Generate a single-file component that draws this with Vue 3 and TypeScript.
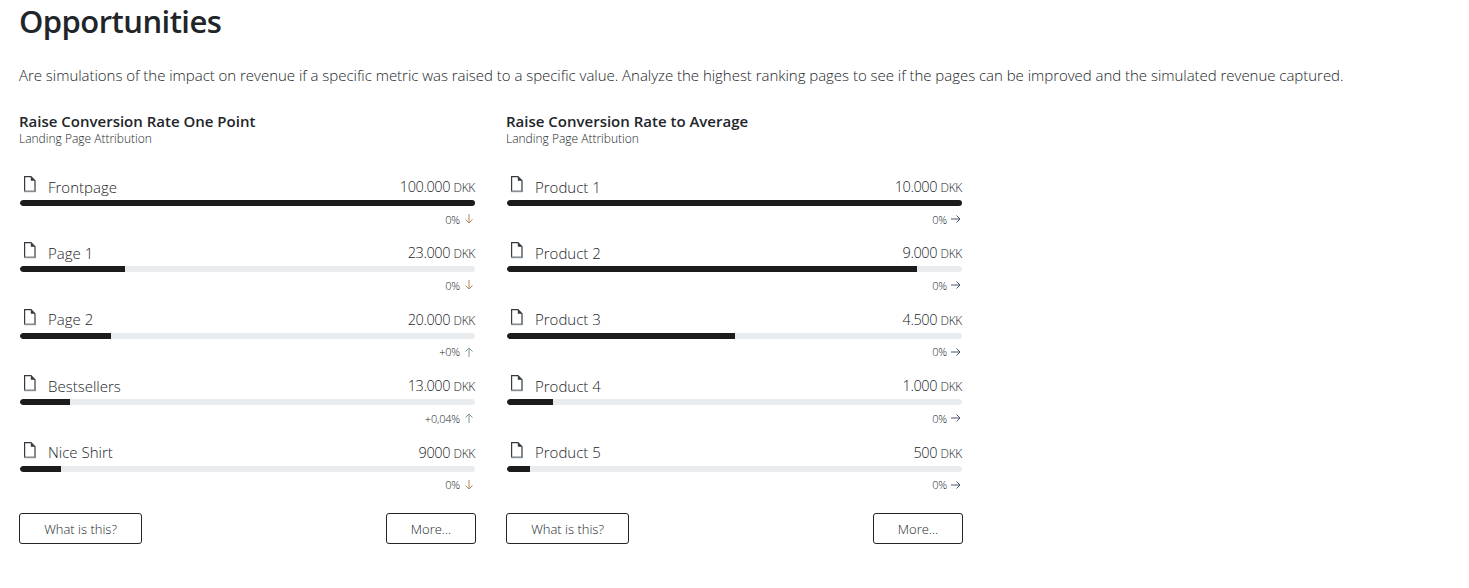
<script setup lang="ts">
interface Row {
  name: string
  value: string
  pct: number
  change: string
  dir: 'up' | 'down' | 'right'
}

interface Card {
  title: string
  rows: Row[]
}

const cards: Card[] = [
  {
    title: 'Raise Conversion Rate One Point',
    rows: [
      { name: 'Frontpage', value: '100.000', pct: 100, change: '0%', dir: 'down' },
      { name: 'Page 1', value: '23.000', pct: 23, change: '0%', dir: 'down' },
      { name: 'Page 2', value: '20.000', pct: 20, change: '+0%', dir: 'up' },
      { name: 'Bestsellers', value: '13.000', pct: 11, change: '+0,04%', dir: 'up' },
      { name: 'Nice Shirt', value: '9000', pct: 9, change: '0%', dir: 'down' },
    ],
  },
  {
    title: 'Raise Conversion Rate to Average',
    rows: [
      { name: 'Product 1', value: '10.000', pct: 100, change: '0%', dir: 'right' },
      { name: 'Product 2', value: '9.000', pct: 90, change: '0%', dir: 'right' },
      { name: 'Product 3', value: '4.500', pct: 50, change: '0%', dir: 'right' },
      { name: 'Product 4', value: '1.000', pct: 10, change: '0%', dir: 'right' },
      { name: 'Product 5', value: '500', pct: 5, change: '0%', dir: 'right' },
    ],
  },
]

const arrows: Record<Row['dir'], string> = {
  up: 'M5 10V1M1.5 4.5 5 1l3.5 3.5',
  down: 'M5 0v9M1.5 5.5 5 9l3.5-3.5',
  right: 'M0 5h9M5.5 1.5 9 5l-3.5 3.5',
}
</script>

<template>
  <div class="page">
    <h1 class="title">Opportunities</h1>
    <p class="intro">Are simulations of the impact on revenue if a specific metric was raised to a specific value. Analyze the highest ranking pages to see if the pages can be improved and the simulated revenue captured.</p>
    <div class="cards">
      <section v-for="card in cards" :key="card.title" class="card">
        <h2 class="card-title">{{ card.title }}</h2>
        <div class="card-sub">Landing Page Attribution</div>
        <div class="rows">
          <div v-for="row in card.rows" :key="row.name" class="row">
            <div class="row-head">
              <span class="row-name">
                <svg class="doc" width="14" height="18" viewBox="0 0 14 18" fill="none" stroke="#343a40" stroke-width="1.2">
                  <path d="M2.6 1.6H9L13 5.8V16.4H2.6z"/>
                  <path d="M8.8 1.6 13 5.8H8.8z" fill="#343a40" stroke="none"/>
                  <path d="M2 16.5h11.6" stroke="#868e96" stroke-width="1.4"/>
                </svg>
                {{ row.name }}
              </span>
              <span class="row-value">{{ row.value }} <small>DKK</small></span>
            </div>
            <div class="bar"><div class="bar-fill" :style="{ width: row.pct + '%' }"></div></div>
            <div class="row-change">
              {{ row.change }}
              <svg width="10" height="10" viewBox="0 0 10 10" fill="none" :stroke="row.dir === 'right' ? '#4a5568' : row.dir === 'up' ? '#7a9a8c' : '#b08a5a'" stroke-width="1">
                <path :d="arrows[row.dir]"/>
              </svg>
            </div>
          </div>
        </div>
        <div class="actions">
          <button type="button" class="btn btn-wide">What is this?</button>
          <button type="button" class="btn">More...</button>
        </div>
      </section>
    </div>
  </div>
</template>

<style>
body {
  background: #fff;
}
</style>

<style scoped>
.page {
  padding: 0 19px;
  color: #212529;
  font-family: "Open Sans", "Noto Sans", sans-serif;
  font-weight: 300;
}

.title {
  margin: 0;
  height: 43px;
  font-size: 31px;
  line-height: 43px;
  font-weight: 600;
  letter-spacing: -0.55px;
}

.intro {
  margin: 20px 0 0;
  font-size: 15px;
  line-height: 24px;
  letter-spacing: -0.03px;
  white-space: nowrap;
}

.cards {
  display: flex;
  gap: 30px;
  margin-top: 24px;
}

.card {
  width: 457px;
}

.card-title {
  margin: 0 0 1px;
  font-size: 15px;
  line-height: 20px;
  font-weight: 600;
}

.card-sub {
  font-size: 12px;
  line-height: 14px;
}

.rows {
  margin-top: 29px;
}

.row {
  height: 66.4px;
  padding: 0 1px;
  box-sizing: border-box;
}

.row-head {
  display: flex;
  justify-content: space-between;
  align-items: center;
  height: 25px;
}

.row-name {
  display: flex;
  align-items: center;
  gap: 12px;
  padding-left: 2px;
  padding-bottom: 2px;
  font-size: 15px;
}

.doc {
  margin-top: -5px;
}

.row-value {
  padding-bottom: 2px;
  font-size: 14.5px;
  letter-spacing: -0.4px;
}

.row-value small {
  font-size: 12px;
  letter-spacing: -0.3px;
}

.bar {
  height: 6px;
  border-radius: 3px;
  background: #e9ecef;
  overflow: hidden;
}

.bar-fill {
  height: 100%;
  background: #1c1c1c;
  border-radius: 3px 0 0 3px;
}

.row-change {
  display: flex;
  justify-content: flex-end;
  align-items: center;
  gap: 4px;
  height: 14px;
  margin-top: 6px;
  padding-right: 1px;
  font-size: 11px;
  letter-spacing: -0.2px;
}

.actions {
  display: flex;
  justify-content: space-between;
  margin-top: 6px;
}

.btn {
  width: 90px;
  height: 31px;
  padding: 1px 0 0;
  background: #fff;
  border: 1px solid #212529;
  border-radius: 3px;
  color: #212529;
  font-family: inherit;
  font-weight: 300;
  font-size: 13px;
}

.btn-wide {
  width: 123px;
}
</style>
